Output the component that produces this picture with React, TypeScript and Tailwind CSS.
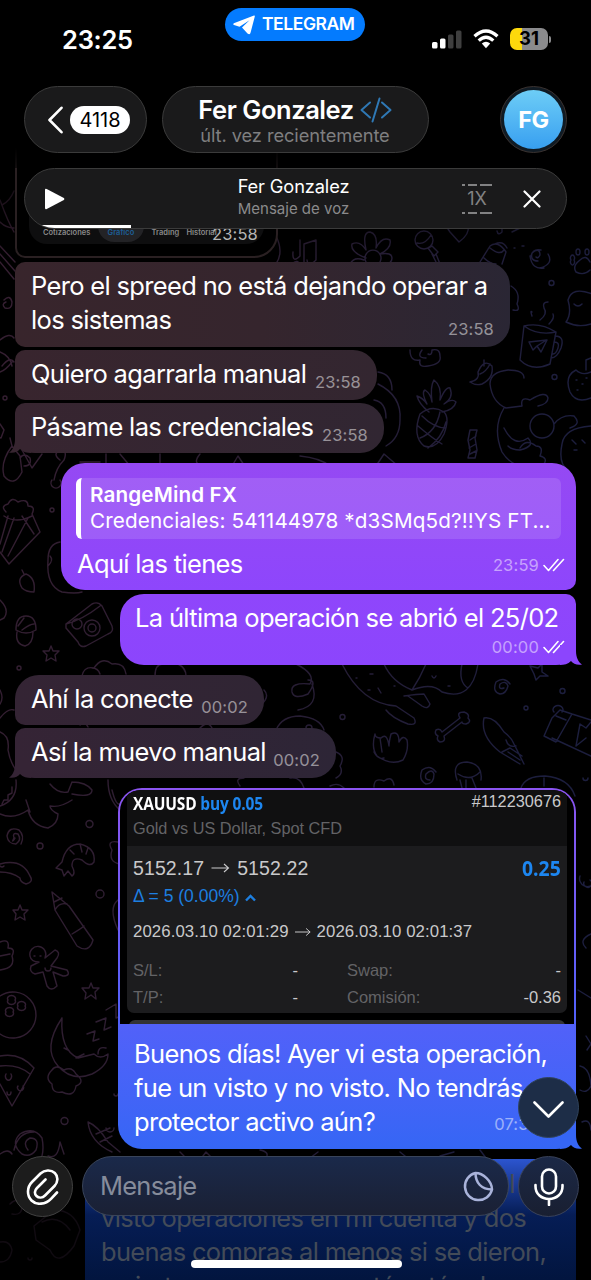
import { ReactNode } from "react";
import clsx from "clsx";

type BubbleProps = {
  side: "in" | "out";
  tail?: string;
  className?: string;
  children: ReactNode;
};

// Doodles of the chat wallpaper, in page coordinates.
const DOODLES = [
  // pencil and guitar at the top left
  "M0 246 L15 262 M0 254 L15 271 M0 262 L14 279 M0 200 q8 22 14 32 M0 222 q6 6 14 6 M2 205 q8 -4 12 -14",
  "M4 300 q6 -6 8 2 q0 8 -7 6 q-4 -4 1 -6 M0 340 q10 -8 14 -2",
  "M0 352 q10 4 12 14 M2 366 q8 -10 12 -4 M0 372 q6 -2 12 -10",
  "M3 398 a2 2 0 1 0 4 0 a2 2 0 1 0 -4 0 M0 424 l4 6 l-3 8 l-3 -1",
  // notes
  "M292 264 q6 -6 8 2 q0 6 -8 4 M300 240 v16 q-8 8 -7 -4 M304 266 v-22 l12 -4 v20 q-8 8 -9 0 M276 236 q8 16 0 28",
  // flower
  "M366 262 a8 8 0 1 1 14 0 M366 258 q-16 -6 -14 -14 q8 -4 14 6 q-4 -18 4 -18 q8 2 6 16 q6 -12 14 -8 q2 8 -10 14 q12 -2 12 4 q0 6 -8 6 M350 264 q4 -8 14 -4",
  // lollipop
  "M415 240 a9 9 0 1 1 18 0 a9 9 0 1 1 -18 0 M417 243 q8 2 14 -8 M428 248 l4 -2 l6 6 l-4 4 z M432 254 l6 12 M436 254 l4 10",
  "M450 232 q-8 -10 6 -10 q8 -4 12 4 q2 8 -9 16 z",
  // jar
  "M480 262 l10 -16 q8 -6 16 6 l-4 12 M490 248 q10 8 14 2 M484 258 q6 6 12 6 M495 244 q8 -4 12 4",
  "M512 232 l8 -4 M514 248 h1 M522 246 h2 M502 226 v6 q-4 4 -5 -1",
  // swirl
  "M538 261 q-8 0 -6 -8 q8 -6 8 2 q-2 4 -4 2 M540 268 q14 -4 8 -14 M530 256 q2 14 14 12 M531 256 q2 -8 10 -6",
  // paw
  "M576 272 q-4 -6 4 -12 q6 -6 10 2 M576 272 q8 4 14 -2 M571 260 a2 3 0 1 1 3 0 a2 3 0 1 1 -3 0 M576 252 a2 3 0 1 1 4 0 a2 3 0 1 1 -4 0 M585 252 a2 3 0 1 1 4 0 a2 3 0 1 1 -4 0",
  "M549 283 a2.500 2.500 0 1 0 5 0 a2.500 2.500 0 1 0 -5 0",
  // ghost
  "M566 322 q6 -8 2 -22 q4 -14 24 -6 M566 322 q12 6 25 2 M574 304 q4 4 8 0",
  // mug with a plane
  "M524 326 l-4 34 q12 12 30 4 l6 -32 q-16 -10 -32 -6 M524 326 q14 10 32 6 M555 336 q10 0 6 12 q-4 10 -10 10 M554 342 q6 0 4 6 q-2 6 -5 6 M529 342 l18 -2 l-6 12 l-4 -6 l-4 4 z M537 346 l8 -5 M532 316 q-2 -6 0 -4 M540 320 q8 -6 4 -12 q-2 -6 4 -6 M549 324 q6 -6 4 -10",
  "M511 286 q10 6 6 18 q4 8 -4 6 M552 377 a2.500 2.500 0 1 0 5 0 a2.500 2.500 0 1 0 -5 0",
  // curly cloud
  "M410 350 q0 12 10 10 q-2 8 8 6 q14 -2 12 -10 q0 -8 -8 -6 q0 6 -4 4 M422 350 q-6 8 4 8",
  // pepper
  "M470 382 q10 -2 8 -10 q6 -14 14 -6 q2 12 -10 18 q-6 2 -12 -2 M484 366 v-6 M480 374 q6 -2 10 -10",
  // pineapple
  "M420 414 q-8 22 4 32 q12 4 20 -12 q6 -16 0 -22 q-12 -8 -24 2 M418 426 q14 12 24 18 M422 416 q12 12 24 12 M420 438 q16 -6 20 -26 M428 448 q14 -10 18 -26 M429 412 q-10 -8 -12 -16 q6 2 10 8 q-6 -12 -2 -14 q6 4 7 12 q-2 -16 2 -22 q8 6 6 20 q6 -14 10 -12 q4 10 -6 16 q8 -6 12 -2 q-2 8 -14 10",
  // candy
  "M470 430 h7 l-2 8 l2 12 l-2 8 h-7 l2 -8 l-2 -10 z M470 440 l6 -4 M469 448 l7 -4 M470 454 l6 -3",
  // bear behind the bubble
  "M378 372 q14 2 14 18 M378 384 q24 12 22 36 q0 18 -14 26 M374 400 q12 2 12 18",
  // cat with a ball
  "M524 378 q0 -8 -16 -8 q-18 2 -18 14 q2 18 16 24 l16 -2 q-2 -10 8 -6 q16 -10 18 -2 q0 6 -10 8 M504 408 q-12 20 -2 44 q10 16 30 16 M504 428 q10 20 24 10 q8 8 -8 12 q-8 0 -12 -4 M530 426 a12 12 0 1 1 24 0 a12 12 0 1 1 -24 0 M554 424 q8 -10 20 -8 q8 8 -4 12 M520 448 q6 -10 16 -2 q8 0 4 10 q8 2 4 8",
  "M562 444 q2 -16 29 -18 M562 444 q-4 20 6 26 M572 440 l4 4 M582 440 l3 3 M574 450 h3",
  // strawberry
  "M576 370 q-12 6 -6 22 q6 12 21 6 M576 370 q6 6 15 2 M586 370 v-10 l5 -2 M576 380 h1 M582 384 h1 M577 390 h1 M586 378 h1",
  // left column
  "M12 446 q-12 16 -8 30 q10 12 18 -4 l-2 -16 z M12 446 l-2 -8 M20 458 q4 -6 10 0 q2 8 -6 8 M22 450 l10 18 l10 -14",
  "M60 460 q-8 -6 0 -10 q8 0 4 10 q-8 8 -10 20 M52 480 a5 5 0 1 0 8 0 M80 462 h20 M106 454 v12 M120 454 l10 12",
  "M160 454 v10 M200 454 q-10 12 8 12 M232 466 l6 -10 l8 12 M300 456 q20 2 30 10 M376 466 l8 -12 l14 12",
  // popcorn
  "M6 512 q-6 -6 2 -8 q4 -8 10 -2 q10 -4 10 4 q8 0 4 8 l8 18 l-31 32 l-9 -12 M4 516 q12 8 28 0 M8 516 l-8 28 M14 518 l-12 34 M22 516 l12 18 M28 518 l-20 38",
  "M50 510 a2 2 0 1 0 4 0 a2 2 0 1 0 -4 0",
  "M22 588 q-6 -10 4 -14 q10 4 8 18 q-8 0 -12 -4 M24 574 l-2 -4",
  "M60 542 q-12 2 -12 18 q-2 26 14 32 q14 2 20 0 M50 556 q4 4 -2 10",
  "M0 600 q10 10 4 18 l-4 2",
  // camera
  "M66 624 l26 -20 q6 -3 10 2 l10 20 q2 6 -4 8 l-22 12 q-6 2 -8 -4 l-12 -14 z M66 624 q16 -4 34 -18 M72 624 a5 5 0 1 0 10 0 a5 5 0 1 0 -10 0 M84 628 a8 8 0 1 0 16 0 a8 8 0 1 0 -16 0 M88 628 a4 4 0 1 0 8 0 a4 4 0 1 0 -8 0",
  // acorn
  "M16 630 q0 -14 10 -14 q10 0 10 14 q-10 6 -20 0 M17 632 q-2 12 8 14 q8 -2 8 -14 M18 626 l6 -8 M22 630 q8 -6 12 -6",
  "M51 646 l2 5 l6 0 l-4 4 l1 6 l-5 -3 l-5 3 l1 -6 l-4 -4 l6 0 z",
  "M17 668 a2 2 0 1 0 4 0 a2 2 0 1 0 -4 0 M0 690 q4 8 0 14",
  "M82 676 q2 -10 12 -8 q8 -12 18 -4 q12 -2 14 10 M92 668 q6 0 8 6 M155 676 q0 -12 8 -12 M178 664 q8 4 8 12",
  "M0 718 q8 -10 14 -8 M0 732 q10 4 8 18 q2 12 8 20 M264 690 q6 6 -2 14 M80 725 q4 -6 8 2 M200 728 q8 -8 12 0",
  // balloon and whale
  "M296 664 q20 10 14 20 q-20 -2 -18 8 q2 8 16 2 q10 -14 0 -14 M312 684 q8 22 -14 26 M276 730 q6 -14 24 -14 q20 2 24 14 M306 728 a3 3 0 0 1 6 0",
  "M332 664 h10 q20 40 54 42 l18 12 q4 8 -6 6 q-16 -6 -22 -14 M384 664 q8 18 28 26 q8 -12 14 -26 M404 696 q14 -2 20 -2 l6 10 q-2 6 -8 2 l-14 -10 M412 690 q20 -8 30 2 q30 10 36 -28 M462 664 q-4 18 6 24 M356 678 h1 M368 690 h2 M378 688 l3 5 M394 686 h1 M370 674 h3 M432 676 q2 4 4 0 M448 686 h2",
  "M340 717 a2.500 2.500 0 1 0 5 0 a2.500 2.500 0 1 0 -5 0 M524 708 a2 2 0 1 0 4 0 a2 2 0 1 0 -4 0 M560 691 a2.500 2.500 0 1 0 5 0 a2.500 2.500 0 1 0 -5 0",
  "M530 666 l8 2 l4 -4 l0 8 l6 4 l-8 0 l-4 4 l-2 -6 z M504 688 q-6 2 -4 -4 q6 -4 8 2 q-2 8 -8 8 q-8 -2 -4 -12 q8 -6 14 2",
  // bone
  "M442 732 l18 -14 q-4 -6 4 -6 q6 2 4 6 q4 4 -2 6 q-4 0 -4 -2 l-18 14 q2 6 -4 6 q-4 -2 -2 -6 q-4 -2 -2 -6 q4 -2 6 2",
  // shell
  "M375 734 q-4 14 2 22 q14 10 26 4 q6 -10 4 -20 q-4 -6 -8 2 q0 -12 -8 -8 q-2 8 -2 12 q-2 -14 -8 -8 q-6 0 -6 -4 z M380 738 l2 14 M374 752 q4 8 10 6",
  // squid
  "M484 718 q10 -2 20 14 q8 6 10 12 l10 20 M484 718 q-4 18 16 34 l20 12 M502 752 l8 -4 l12 8 M506 740 q2 8 10 6 M508 752 l12 8",
  // present
  "M552 718 l-8 18 l12 6 l16 -28 l-12 -4 z M552 738 l39 18 M572 714 l19 6 M576 746 l4 -22 l6 4 l5 -6 M576 746 l10 -8 M554 712 a5 4 0 1 1 8 0 M556 716 l10 4",
  // jellyfish and friends
  "M457 780 q-6 -18 10 -18 q16 2 14 18 M458 774 q12 8 22 -2 M466 780 v8 M472 778 l4 10 M460 780 l2 8 M430 780 q-6 0 -4 -6 q6 -6 8 0 q0 10 -8 10 q-8 -4 -4 -14 q8 -6 14 2",
  "M374 787 q0 -10 10 -6 q8 -6 10 4 M521 788 q4 -12 24 -12 q24 2 30 20 M544 778 v8 M583 778 a2.500 2.500 0 1 0 5 0 M336 752 q10 4 4 14 q4 8 -4 12 M240 786 q-6 -8 4 -8 M330 786 q8 -4 14 2 M290 778 q10 -2 14 10",
  // dinosaur
  "M0 814 q14 6 28 -4 q4 16 20 18 q10 -4 10 -14 q-8 -4 -8 -8 q10 2 22 -6 M72 794 q20 4 20 -4 q-6 -8 -20 -8 M0 806 q18 -6 16 -26 M2 804 l2 -4 l4 0 l0 -5 l4 -2 l0 -6 M50 784 q8 10 18 8 l4 -10 M26 800 l4 12",
  "M15 838 q-4 6 -1 0 q-2 -6 4 -4 q4 6 -2 10 q-8 0 -9 -8 q2 -10 12 -6 q6 6 2 14 M86 824 a3.500 3.500 0 1 0 7 0 a3.500 3.500 0 1 0 -7 0 M37 846 a3 3 0 1 0 6 0 a3 3 0 1 0 -6 0",
  "M108 780 q0 20 12 30 M112 790 q4 16 8 14 M118 842 q-12 -2 -6 8 q-4 12 8 14 M118 900 q-10 8 0 30",
  // shrimp
  "M62 862 q4 -18 18 -18 q16 4 14 18 q-4 6 -12 -2 q-10 -4 -10 6 q4 8 0 10 l-4 -5 l-4 5 l-2 -6 l-6 -2 z M70 850 l4 4 M80 844 l2 8 M88 848 l-2 6",
  // rainbow
  "M0 864 q22 -6 30 12 q4 6 -4 8 q-6 -2 -6 -6 q-8 -6 -20 -6 M0 866 q2 2 4 0",
  "M20 905 l2 5 l6 0 l-4 4 l1 6 l-5 -3 l-5 3 l1 -6 l-3 -4 l5 0 z M96 894 a4 4 0 1 0 8 0 a4 4 0 1 0 -8 0",
  // marker
  "M52 892 l3 18 l22 36 q12 8 16 -6 l-24 -34 z M55 910 q4 -8 12 -6 M72 934 q10 -6 12 -8 M54 902 l8 -4",
  // ice cream
  "M0 942 q10 -4 8 6 q8 0 4 8 q4 12 -12 14 M0 956 l10 -2",
  // gingerbread man
  "M30 956 a8 8 0 1 1 15 2 l10 -8 q6 2 2 8 l-6 8 l16 4 q4 6 -4 6 l-10 -4 l4 14 q-6 6 -10 0 l-4 -14 l-8 2 q-6 -2 -4 -8 l8 -4 q-8 0 -9 -6 M34 956 h1 M40 956 h1 M45 968 a3 3 0 1 0 6 0",
  "M91 983 l2 5 l6 0 l-4 4 l1 7 l-5 -4 l-6 4 l1 -6 l-4 -5 l7 0 z",
  // bowling ball
  "M0 996 a23 23 0 1 1 0 38 M8 1000 a4 3 0 1 0 7 0 a4 3 0 1 0 -7 0 M18 1006 a4 3 0 1 0 7 0 a4 3 0 1 0 -7 0 M6 1012 a4 3 0 1 0 7 0 a4 3 0 1 0 -7 0",
  // moon, cloud and zzz
  "M62 1018 q-20 30 -4 48 q14 16 34 8 q16 -8 16 -20 q-8 6 -14 0 l-16 4 q-18 -8 -16 -40 M98 1054 q0 -8 8 -6 M52 1070 q4 -6 12 0 q8 -4 12 4 q10 8 0 12 q-2 12 -14 6 q-10 2 -10 -8 q-8 -6 0 -14 M64 1048 l4 2 M76 1058 l8 -4",
  "M87 1034 l8 -3 l-2 10 l6 -2 M96 1022 l10 -4 l-2 12 l7 -3 M106 1010 l10 -6 v14 l5 -2",
  // pizza
  "M0 1056 q20 -4 34 12 l-22 38 l-12 -22 M0 1066 q18 -2 30 8 M6 1074 a3 4 0 1 0 5 0 M18 1086 a3 3 0 1 0 5 0 M7 1092 a2 3 0 1 0 4 0",
  "M61 1121 a3.500 3.500 0 1 0 7 0 a3.500 3.500 0 1 0 -7 0 M114 1094 a2 2 0 1 0 4 0",
  // snail
  "M28 1150 q-6 -8 2 -12 q10 0 6 12 q-6 8 -14 4 q-12 -10 -2 -20 q14 -8 22 4 q2 10 0 18 M14 1150 q4 -18 20 -18 M48 1156 q10 4 12 -14 l4 12 M0 1154 q8 -6 12 0",
  // cone
  "M88 1122 q10 4 20 20 l12 10 M88 1122 q2 20 24 30 M96 1134 l14 -6 M100 1142 l12 -6 M106 1128 a4 4 0 1 0 8 0",
  "M180 1152 l8 8 M200 1160 l6 -8 l8 8 M260 1150 q10 2 6 8 M310 1158 l8 -6 M400 1152 l10 8 M440 1156 l14 -4 M480 1150 l6 8",
  "M580 876 a8 8 0 1 0 12 -4 M584 882 a4 4 0 1 0 6 -2 M586 948 q-8 -8 5 -14 M578 990 l13 8 M586 1036 l5 8 l-4 6 M580 1066 q10 2 11 20 q-4 8 -11 4 M582 1122 q8 -4 9 8",
  "M34 1226 l20 -16 q20 0 26 20 l-6 16 q-16 22 -24 4 l-14 -10 z M42 1222 q16 -8 28 8 M10 1204 q8 -8 12 2 q0 10 -10 8 M0 1242 q10 -2 12 8 q-2 12 -12 12 M28 1258 a2 2 0 1 0 4 0",
];

function Wallpaper() {
  return (
    <svg
      aria-hidden="true"
      className="absolute inset-0 h-[1280px] w-[591px]"
      viewBox="0 0 591 1280"
    >
      <defs>
        <linearGradient id="doodle-hue" x1="0" y1="0" x2="1" y2="0.25">
          <stop offset="0" stopColor="#40243a" />
          <stop offset="0.5" stopColor="#31223a" />
          <stop offset="1" stopColor="#212349" />
        </linearGradient>
        <linearGradient id="doodle-fade" x1="0" y1="0" x2="0" y2="1">
          <stop offset="0.12" stopColor="#000" stopOpacity="0.9" />
          <stop offset="0.2" stopColor="#000" stopOpacity="0.15" />
          <stop offset="0.9" stopColor="#000" stopOpacity="0.15" />
          <stop offset="0.95" stopColor="#000" stopOpacity="0.7" />
        </linearGradient>
        <mask id="doodles">
          <g
            fill="none"
            stroke="#fff"
            strokeWidth="1.4"
            strokeLinecap="round"
            strokeLinejoin="round"
          >
            {DOODLES.map((d) => (
              <path key={d} d={d} />
            ))}
          </g>
        </mask>
      </defs>
      <rect width="591" height="1280" fill="url(#doodle-hue)" mask="url(#doodles)" />
      <rect width="591" height="1280" fill="url(#doodle-fade)" />
    </svg>
  );
}

function Ticks() {
  return (
    <svg
      className="h-[14px] w-[22px]"
      viewBox="0 0 22 14"
      fill="none"
      stroke="currentColor"
      strokeWidth="1.6"
      strokeLinecap="round"
      strokeLinejoin="round"
    >
      <path d="M1 7.500 L5.500 12.500 L15 1.500 M10.500 12.500 L20.500 1.500" />
    </svg>
  );
}

function Bubble({ side, tail, className, children }: BubbleProps) {
  return (
    <div
      className={clsx(
        "relative shrink-0",
        side === "in" ? "self-start" : "self-end",
        className,
      )}
    >
      {tail && (
        <svg
          className={clsx(
            "absolute bottom-0 h-5 w-[22px]",
            side === "in" ? "-left-[6px] -scale-x-100" : "-right-[6px]",
            tail,
          )}
          viewBox="0 0 22 20"
        >
          <path d="M16 0 V6 C16 12 18 17 22 19.500 C17 20.500 13 18.500 11 16 C8 19 4 20 0 20 V0 Z" />
        </svg>
      )}
      {children}
    </div>
  );
}

function Time({ children, className }: { children: ReactNode; className?: string }) {
  return (
    <span
      className={clsx(
        "text-[16.500px] leading-5 tracking-[0.01em] whitespace-nowrap",
        className ?? "text-white/50",
      )}
    >
      {children}
    </span>
  );
}

function ShortMessage({
  text,
  time,
  tail,
  className,
}: {
  text: string;
  time: string;
  tail?: string;
  className: string;
}) {
  return (
    <Bubble
      side="in"
      tail={tail}
      className={clsx("flex h-[50px] justify-between rounded-[24px] pr-4 pl-4", className)}
    >
      <span className="pt-[7px] whitespace-nowrap">{text}</span>
      <Time className="pt-[22px] text-white/50">{time}</Time>
    </Bubble>
  );
}

function ArrowRight({ className }: { className: string }) {
  return (
    <svg
      className={className}
      viewBox="0 0 18 12"
      fill="none"
      stroke="currentColor"
      strokeWidth="1.1"
    >
      <path d="M0 6 H17 M12.500 2 L17 6 L12.500 10" />
    </svg>
  );
}

function TradeCard() {
  return (
    <div className="h-[234px] overflow-hidden rounded-t-[21px] bg-black px-[7px] font-['Liberation_Sans',sans-serif] tracking-normal text-[#c9c9cb]">
      <div className="h-[56px] bg-[#101011] pr-[6px] pl-[6px]">
        <div className="flex h-[25px] justify-between">
          <div className="h-[25px] w-[134px]">
            <div className="w-[190px] origin-left scale-x-[0.86] font-['Open_Sans',sans-serif] text-[18px] leading-[26px] font-bold tracking-[-0.01em] text-white">
              XAUUSD <span className="text-[#1d86f0]">buy 0.05</span>
            </div>
          </div>
          <span className="text-[16.300px] leading-[22px]">#112230676</span>
        </div>
        <div className="text-[16.300px] leading-[27px] text-[#636366]">
          Gold vs US Dollar, Spot CFD
        </div>
      </div>
      <div className="h-[167px] rounded-b-[7px] bg-[#1c1c1e] pr-[6px] pl-[6px]">
        <div className="flex h-[35px] items-end justify-between">
          <div className="flex items-center gap-[7px] text-[19.500px] leading-[26px] tracking-[0.005em]">
            5152.17
            <ArrowRight className="h-3 w-[19px]" />
            5152.22
          </div>
          <div className="h-[30px] w-[39px]">
            <div className="w-[60px] origin-left scale-x-[0.9] font-['Open_Sans',sans-serif] text-[21.500px] leading-[34px] font-bold text-[#1d86f0]">
              0.25
            </div>
          </div>
        </div>
        <div className="flex h-[30px] items-center gap-[5px] text-[17.500px] text-[#1d7fe0]">
          Δ = 5 (0.00%)
          <svg
            className="mt-1 h-2 w-[11px]"
            viewBox="0 0 11 8"
            fill="none"
            stroke="currentColor"
            strokeWidth="2.400"
          >
            <path d="M1 6.500 L5.500 2 L10 6.500" />
          </svg>
        </div>
        <div className="mt-[10px] flex h-[22px] items-center gap-[6px] text-[16.800px] tracking-[0.005em]">
          2026.03.10 02:01:29
          <ArrowRight className="h-3 w-[16px]" />
          2026.03.10 02:01:37
        </div>
        <div className="mt-[14px] grid grid-cols-[165px_1fr] gap-x-[49px] text-[16.500px] leading-[27px]">
          <div className="flex justify-between text-[#636366]">
            S/L:<span className="text-[#c9c9cb]">-</span>
          </div>
          <div className="flex justify-between text-[#636366]">
            Swap:<span className="text-[#c9c9cb]">-</span>
          </div>
          <div className="flex justify-between text-[#636366]">
            T/P:<span className="text-[#c9c9cb]">-</span>
          </div>
          <div className="flex justify-between text-[#636366]">
            Comisión:<span className="text-[#c9c9cb]">-0.36</span>
          </div>
        </div>
      </div>
      <div className="mx-[2px] mt-[7px] h-2 rounded-t-md bg-[#333335]" />
    </div>
  );
}

function Messages() {
  return (
    <div className="relative flex h-[1280px] flex-col overflow-hidden pr-[15px] pl-[15px] text-[25.500px] leading-[34px] tracking-[-0.026em] text-white">
      <div className="flex h-[258px] w-[263px] shrink-0 flex-col justify-end rounded-br-[24px] rounded-bl-[10px] border-2 border-[#2a2022] bg-black px-3 pb-3">
        <div className="flex h-9 items-end justify-between rounded-b-[18px] bg-[#0e0e0f] pr-[6px] pl-[14px] text-[7.500px] font-semibold tracking-normal text-[#8a8a8a]">
          <span className="pb-[5px] leading-3">Cotizaciones</span>
          <span className="mb-[2px] rounded-b-2xl bg-[#232326] px-[10px] pt-5 pb-[3px] leading-3 text-[#1d5f96]">
            Gráfico
          </span>
          <span className="pb-[5px] leading-3">Trading</span>
          <span className="pb-[5px] leading-3">Historial</span>
          <Time className="-ml-3 font-normal text-[#b5b5b5]">23:58</Time>
        </div>
      </div>

      <Bubble
        side="in"
        className="mt-1 h-[85px] w-[495px] rounded-[24px] rounded-tl-[10px] rounded-bl-[10px] bg-linear-to-r from-[#38252c] via-[#35252d] to-[#2a2634] pt-[7px] pr-4 pl-4"
      >
        <div className="whitespace-nowrap">Pero el spreed no está dejando operar a</div>
        <div className="flex justify-between">
          <span>los sistemas</span>
          <Time className="pt-[16px] text-white/50">23:58</Time>
        </div>
      </Bubble>
      <ShortMessage
        text="Quiero agarrarla manual"
        time="23:58"
        className="mt-[3px] w-[362px] rounded-tl-[10px] rounded-bl-[10px] bg-linear-to-r from-[#38252e] to-[#332630]"
      />
      <ShortMessage
        text="Pásame las credenciales"
        time="23:58"
        tail="fill-[#372530]"
        className="mt-[3px] w-[369px] rounded-tl-[10px] rounded-bl-[20px] bg-linear-to-r from-[#372530] to-[#312632]"
      />

      <Bubble
        side="out"
        className="mt-[10px] h-[127px] w-[515px] rounded-[24px] rounded-br-[10px] bg-linear-to-b from-[#9549f3] to-[#8e46fc] pt-[15px] pr-[11px] pl-[15px]"
      >
        <div className="h-[61px] w-[485px] overflow-hidden rounded-[6px] border-l-[5px] border-white bg-white/12 pt-[4px] pl-[9px] text-[20.700px] leading-[26px] tracking-[0.006em] whitespace-nowrap">
          <div className="font-semibold">RangeMind FX</div>
          <div>Credenciales: 541144978 *d3SMq5d?!!YS FT...</div>
        </div>
        <div className="mt-[8px] flex justify-between">
          <span className="pl-px">Aquí las tienes</span>
          <div className="flex h-5 items-center gap-1 self-start pt-[16px]">
            <Time>23:59</Time>
            <Ticks />
          </div>
        </div>
      </Bubble>
      <Bubble
        side="out"
        tail="fill-[#8c45fd]"
        className="mt-[4px] flex h-[71px] w-[456px] flex-col rounded-[24px] rounded-tr-[10px] rounded-br-[20px] bg-linear-to-b from-[#8f46fb] to-[#8c45fd] pt-[7px] pr-[11px] pl-[15px]"
      >
        <span className="whitespace-nowrap">La última operación se abrió el 25/02</span>
        <div className="mt-[2px] flex h-5 items-center gap-1 self-end">
          <Time>00:00</Time>
          <Ticks />
        </div>
      </Bubble>

      <ShortMessage
        text="Ahí la conecte"
        time="00:02"
        className="mt-[10px] w-[249px] rounded-bl-[10px] bg-linear-to-r from-[#342434] to-[#302534]"
      />
      <ShortMessage
        text="Así la muevo manual"
        time="00:02"
        tail="fill-[#352435]"
        className="mt-[3px] w-[321px] rounded-tl-[10px] rounded-bl-[20px] bg-linear-to-r from-[#352435] to-[#2d2536]"
      />

      <Bubble
        side="out"
        tail="fill-[#3566f5]"
        className="mt-[10px] h-[361px] w-[458px] rounded-[24px] rounded-br-[20px] bg-linear-to-b from-[#8b54f0] via-[#5560fa] via-60% to-[#3566f5] p-[2px]"
      >
        <TradeCard />
        <div className="pt-[13px] pr-[9px] pl-[14px]">
          <div className="whitespace-nowrap">Buenos días! Ayer vi esta operación,</div>
          <div className="whitespace-nowrap">fue un visto y no visto. No tendrás</div>
          <div className="flex justify-between">
            <span>protector activo aún?</span>
            <div className="flex h-5 items-center gap-1 self-start pt-[18px]">
              <Time>07:38</Time>
              <Ticks />
            </div>
          </div>
        </div>
      </Bubble>

      <Bubble
        side="out"
        className="mt-[10px] h-[160px] w-[491px] rounded-[24px] rounded-br-[10px] bg-linear-to-b from-[#2c55d0] via-[#061d55] via-35% to-[#02153f] to-75% pt-[8px] pl-4 text-[#434b58]"
      >
        <div className="whitespace-nowrap">Buenas! de nuevo Fer! hoy también l</div>
        <div className="whitespace-nowrap">visto operaciones en mi cuenta y dos</div>
        <div className="whitespace-nowrap">buenas compras al menos si se dieron,</div>
        <div className="whitespace-nowrap">y ciertas pausas que noté están de</div>
      </Bubble>
    </div>
  );
}

function StatusBar() {
  return (
    <div className="flex h-[86px] items-start pr-[40px] pl-[62px]">
      <span className="mt-[24px] w-[163px] text-[25.500px] leading-8 font-semibold tracking-[-0.01em]">
        23:25
      </span>
      <div className="mt-2 flex h-[33px] w-[140px] items-center rounded-full bg-[#047bfe] pl-[7px]">
        <svg className="h-[22px] w-[24px] fill-white" viewBox="0 0 24 22">
          <path d="M22 1.500 L1.800 9.300 Q0.300 10.200 2 11 L7.500 12.800 L17.500 6.200 L10 13.500 L15.500 19.500 Q18 21.500 18.600 18.500 L22.800 2.600 Q23 1.200 22 1.500 Z" />
        </svg>
        <span className="ml-[6px] text-[17.500px] font-semibold tracking-[-0.025em]">
          TELEGRAM
        </span>
      </div>
      <div className="mt-[28px] ml-auto flex items-center">
        <svg className="h-[20px] w-[30px]" viewBox="0 0 30 20">
          <rect x="0" y="13" width="5.500" height="6.500" rx="1.500" fill="#fff" />
          <rect x="8" y="9.500" width="5.500" height="10" rx="1.500" fill="#fff" />
          <rect x="16" y="5.500" width="5.500" height="14" rx="1.500" fill="#3f3f3f" />
          <rect x="24" y="1.500" width="5.500" height="18" rx="1.500" fill="#3f3f3f" />
        </svg>
        <svg className="ml-[11px] h-[20px] w-[26px]" viewBox="0 0 26 20">
          <g fill="none" stroke="#fff" strokeWidth="3.300">
            <path d="M1.500 7.200 Q13 -3.200 24.500 7.200" />
            <path d="M5.700 11.600 Q13 4.800 20.300 11.600" />
          </g>
          <path d="M8.800 14.600 Q13 10.800 17.200 14.600 L13 19.200 Z" fill="#fff" />
        </svg>
        <div className="ml-[11px] flex h-[22px] w-[38px] items-center justify-center rounded-[7px] bg-linear-to-r from-[#fdd90c] from-32% to-[#8b8b8d] to-32% text-[18.500px] font-bold tracking-normal text-black">
          31
        </div>
        <div className="ml-[1px] h-[7px] w-[2px] rounded-r-full bg-[#8b8b8d]" />
      </div>
    </div>
  );
}

function Header() {
  return (
    <div className="absolute inset-x-0 top-0 text-white">
      <div className="bg-linear-to-b from-black from-88% to-black/60">
        <StatusBar />
        <div className="flex h-[82px] items-start justify-between pr-6 pl-6">
          <div className="flex h-[67px] w-[123px] items-center rounded-full border border-[#3b3b3b] bg-[#1a1a1b] pl-[22px]">
            <svg
              className="h-[28px] w-[16px]"
              viewBox="0 0 16 28"
              fill="none"
              stroke="#fff"
              strokeWidth="2.600"
              strokeLinecap="round"
              strokeLinejoin="round"
            >
              <path d="M14.500 1.800 L2.500 14 L14.500 26.200" />
            </svg>
            <span className="ml-[7px] flex h-[28px] w-[60px] items-center justify-center rounded-full bg-white text-[20px] text-black">
              4118
            </span>
          </div>
          <div className="mr-[57px] flex h-[67px] w-[267px] flex-col items-center rounded-full border border-[#3b3b3b] bg-[#1a1a1b] pt-[7px]">
            <div className="flex items-center gap-[6px] text-[25.500px] leading-[31px] font-semibold tracking-[-0.018em] whitespace-nowrap">
              Fer Gonzalez
              <svg
                className="h-[26px] w-[32px]"
                viewBox="0 0 32 26"
                fill="none"
                stroke="#2f78b4"
                strokeWidth="2"
                strokeLinecap="round"
                strokeLinejoin="round"
              >
                <path d="M10 5.500 L1.500 13 L10 20.500 M22 5.500 L30.500 13 L22 20.500 M19.500 1.500 L12.500 24.500" />
              </svg>
            </div>
            <div className="text-[18.300px] leading-[20px] tracking-[-0.005em] whitespace-nowrap text-[#7f7f80]">
              últ. vez recientemente
            </div>
          </div>
          <div className="flex h-[67px] w-[67px] items-center justify-center rounded-full border border-[#3a3230] bg-[#101b24]">
            <div className="flex h-[59px] w-[59px] items-center justify-center rounded-full bg-linear-to-b from-[#6dcdf6] to-[#379ff0] text-[23.500px] font-bold tracking-[-0.02em]">
              FG
            </div>
          </div>
        </div>
      </div>

      <div className="mx-6 h-[61px] overflow-hidden rounded-full border border-[#3b3b3b] bg-[#1a1a1b]">
        <div className="flex h-[56px] items-center justify-between pr-[25px] pl-[20px]">
          <svg className="mt-1 h-[22px] w-[20px] fill-white" viewBox="0 0 21 22">
            <path d="M0 1.500 Q0 -0.300 1.800 0.600 L19.800 10 Q21 11 19.800 12 L1.800 21.400 Q0 22.300 0 20.500 Z" />
          </svg>
          <div className="ml-[60px] flex w-[228px] flex-col items-center whitespace-nowrap">
            <span className="text-[18.300px] leading-[23px] tracking-[-0.008em]">
              Fer Gonzalez
            </span>
            <span className="text-[15px] leading-[21px] text-[#8a8a8b]">Mensaje de voz</span>
          </div>
          <div className="flex items-center gap-[31px] pt-1">
            <div className="flex w-[30px] flex-col items-center text-[18px] leading-[26px] text-[#828283]">
              <svg
                className="h-[2px] w-[30px] stroke-[#828283]"
                viewBox="0 0 30 2"
                strokeWidth="2"
              >
                <path d="M0 1 H3 M6 1 H15 M18 1 H30" />
              </svg>
              1X
              <svg
                className="h-[2px] w-[30px] stroke-[#828283]"
                viewBox="0 0 30 2"
                strokeWidth="2"
              >
                <path d="M0 1 H3 M6 1 H15 M18 1 H30" />
              </svg>
            </div>
            <svg
              className="h-[18px] w-[18px]"
              viewBox="0 0 18 18"
              stroke="#fff"
              strokeWidth="2.200"
              strokeLinecap="round"
            >
              <path d="M1.500 1.500 L16.500 16.500 M16.500 1.500 L1.500 16.500" />
            </svg>
          </div>
        </div>
        <div className="h-[4px] w-[106px] bg-white" />
      </div>
    </div>
  );
}

function Composer() {
  return (
    <div className="absolute inset-x-0 bottom-0 flex h-[203px] flex-col pr-3 pl-3">
      <div className="flex h-[61px] w-[61px] shrink-0 items-center justify-center self-end rounded-full border border-[#30435c] bg-[#1d2d47]">
        <svg
          className="mt-1 h-[18px] w-[31px]"
          viewBox="0 0 31 18"
          fill="none"
          stroke="#fff"
          strokeWidth="2.600"
          strokeLinecap="round"
          strokeLinejoin="round"
        >
          <path d="M1.500 1.500 L15.500 15.500 L29.500 1.500" />
        </svg>
      </div>
      <div className="mt-[18px] flex gap-[9px]">
        <div className="flex h-[61px] w-[61px] shrink-0 items-center justify-center rounded-full border border-[#414141] bg-[#1c1c1c]">
          <svg
            className="h-[36px] w-[34px]"
            viewBox="0 0 34 36"
            fill="none"
            stroke="#fff"
            strokeWidth="2.600"
            strokeLinecap="round"
            strokeLinejoin="round"
          >
            <path d="M31 23.500 L25 29.800 C19.500 35.500 10.500 36.500 5.500 31.500 C0.500 26.500 1 18 6 13 L14.500 4.500 C18.500 0.800 25 0.500 28.800 4 C32.500 7.500 32 13.500 28.500 17 L19 26.500 C16.500 29 12.800 29.200 10.500 27 C8.200 24.800 8.500 21.500 11 19 L19.500 10.500" />
          </svg>
        </div>
        <div className="flex h-[60px] w-[427px] items-center justify-between rounded-full border border-[#39445a] bg-linear-to-b from-[#1a294a] to-[#1a2034] pr-[14px] pl-[17px] text-[25.500px] tracking-[-0.03em] text-[#868c9b]">
          Mensaje
          <svg
            className="h-[31px] w-[31px]"
            viewBox="0 0 31 31"
            fill="none"
            stroke="#a9b3da"
            strokeWidth="2.500"
            strokeLinejoin="round"
          >
            <path d="M12.500 2 A13.700 13.700 0 1 0 29 18.500 C29 10 20 2 12.500 2 Z" />
            <path d="M12.500 2 C12.500 12 18.500 18.500 29 18.500" />
          </svg>
        </div>
        <div className="flex h-[61px] w-[61px] shrink-0 items-center justify-center rounded-full border border-[#39425a] bg-linear-to-b from-[#1b2846] to-[#191f31]">
          <svg
            className="h-[38px] w-[30px]"
            viewBox="0 0 30 38"
            fill="none"
            stroke="#fff"
            strokeWidth="2.600"
            strokeLinecap="round"
          >
            <rect x="8" y="1.500" width="14" height="24" rx="7" />
            <path d="M1.500 17 V18.500 C1.500 26 7.500 31 15 31 C22.500 31 28.500 26 28.500 18.500 V17 M15 31 V37" />
          </svg>
        </div>
      </div>
      <div className="mt-[43px] ml-[179px] h-2 w-[211px] rounded-full bg-white" />
    </div>
  );
}

export default function App() {
  return (
    <div className="relative h-[1280px] w-[591px] overflow-hidden bg-black font-['Inter','Liberation_Sans',sans-serif]">
      <Wallpaper />
      <Messages />
      <Header />
      <Composer />
    </div>
  );
}
